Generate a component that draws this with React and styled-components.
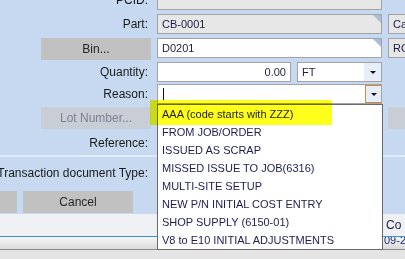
import React from 'react';
import styled, { createGlobalStyle } from 'styled-components';

const GlobalStyle = createGlobalStyle`
  html, body { margin: 0; padding: 0; background: #c6d9f0; }
  body { font-family: "Liberation Sans", Arial, sans-serif; }
`;

const reasons = [
  'AAA (code starts with ZZZ)',
  'FROM JOB/ORDER',
  'ISSUED AS SCRAP',
  'MISSED ISSUE TO JOB(6316)',
  'MULTI-SITE SETUP',
  'NEW P/N INITIAL COST ENTRY',
  'SHOP SUPPLY (6150-01)',
  'V8 to E10 INITIAL ADJUSTMENTS',
];

const Page = styled.div`
  position: relative;
  width: 405px;
  height: 259px;
  overflow: hidden;
  background: #c6d9f0;
  display: flex;
  flex-direction: column;
`;

const Form = styled.div`
  display: flex;
  flex-direction: column;
  margin-top: -10px;
`;

const Row = styled.div`
  display: grid;
  grid-template-columns: 151px 225px 60px;
  column-gap: 6px;
  height: ${(p) => p.h}px;
  margin-top: ${(p) => p.gap || 0}px;
  flex-shrink: 0;
`;

const Label = styled.div`
  display: flex;
  justify-content: flex-end;
  align-items: center;
  padding-right: 3px;
  font-size: 12px;
  color: #1a1a1a;
  white-space: nowrap;
  min-width: 0;
`;

const Field = styled.div`
  position: relative;
  box-sizing: border-box;
  height: ${(p) => p.h || 20}px;
  border: 1px solid #a3a3a3;
  background: ${(p) => (p.disabled ? '#e7e7e7' : '#ffffff')};
  display: flex;
  align-items: center;
  justify-content: ${(p) => (p.right ? 'flex-end' : 'flex-start')};
  padding: 0 4px;
  font-size: 11px;
  color: #1c1c44;
  white-space: nowrap;
  overflow: hidden;

  ${(p) =>
    p.corner &&
    `
    &::after {
      content: '';
      position: absolute;
      top: 0;
      right: 0;
      border-top: 8px solid #a9bedb;
      border-left: 8px solid transparent;
    }
  `}
`;

const Split = styled.div`
  display: flex;
  gap: 6px;
  min-width: 0;
`;

const Select = styled(Field)`
  flex: 1;
  padding-right: 0;
  justify-content: space-between;
`;

const ArrowBox = styled.div`
  box-sizing: border-box;
  width: 17px;
  height: 100%;
  display: flex;
  align-items: center;
  justify-content: center;
  background: #e6eef9;
  border: ${(p) => (p.focused ? '1px solid #d2883c' : 'none')};
  margin-right: ${(p) => (p.focused ? '-1px' : '0')};
`;

const Arrow = styled.span`
  width: 0;
  height: 0;
  border-left: 3px solid transparent;
  border-right: 3px solid transparent;
  border-top: 3px solid #111;
`;

const Caret = styled.span`
  width: 1px;
  height: 12px;
  background: #111;
  margin-left: 1px;
`;

const Button = styled.div`
  box-sizing: border-box;
  flex-shrink: 0;
  width: 110px;
  height: 22px;
  display: flex;
  align-items: center;
  justify-content: center;
  font-size: 12px;
  white-space: nowrap;
  background: ${(p) => (p.disabled ? '#c8cdd6' : '#c1c1c1')};
  color: ${(p) => (p.disabled ? '#7b8392' : '#262626')};
`;

const LabelButtonCell = styled.div`
  display: flex;
  justify-content: flex-end;
`;

const SideBox = styled.div`
  box-sizing: border-box;
  height: 20px;
  border: 1px solid #a3a3a3;
  background: #e6e6e6;
  font-size: 11px;
  color: #1c1c44;
  display: flex;
  align-items: center;
  padding-left: 4px;
`;

const SideBlock = styled.div`
  height: 22px;
  background: #c8cdd6;
`;

const Separator = styled.div`
  height: 2px;
  background: #e2ecf8;
  flex-shrink: 0;
`;

const ButtonBar = styled.div`
  width: 133px;
  height: 22px;
  margin-top: 2px;
  display: flex;
  justify-content: flex-end;
  gap: 6px;
  flex-shrink: 0;
`;

const Footer = styled.div`
  display: flex;
  flex-direction: column;
  margin-top: 1px;
  flex: 1;
`;

const InfoArea = styled.div`
  height: 22px;
  background: #eef0f4;
  display: flex;
  align-items: center;
  padding-left: 386px;
  font-size: 12px;
  color: #1c1c44;
  white-space: nowrap;
`;

const Colon = styled.span`
  color: #e08a1c;
  margin-left: 3px;
`;

const BlueLine = styled.div`
  height: 1px;
  background: #3f8ede;
`;

const StatusBar = styled.div`
  height: 12px;
  background: linear-gradient(#f6f6f6, #dadada);
  border-bottom: 1px solid #8c8c8c;
  overflow: hidden;
  padding-left: 384px;
  font-size: 11px;
  line-height: 12px;
  color: #1c2a6a;
  white-space: nowrap;
`;

const StatusText = styled.div`
  margin-top: -3px;
`;

const BottomBand = styled.div`
  flex: 1;
  background: #e4e4e4;
`;

const DropList = styled.ul`
  position: absolute;
  left: 157px;
  top: 104px;
  width: 226px;
  box-sizing: border-box;
  margin: 0;
  padding: 0;
  list-style: none;
  background: #ffffff;
  border: 1px solid #6a6a6a;
  z-index: 2;
`;

const Item = styled.li`
  height: 18px;
  display: flex;
  align-items: center;
  padding-left: 4px;
  font-size: 11px;
  color: #1e1c50;
  white-space: nowrap;
`;

const Highlight = styled.div`
  position: absolute;
  left: 150px;
  top: 100px;
  width: 182px;
  height: 25px;
  background: #ffff1e;
  mix-blend-mode: multiply;
  z-index: 3;
`;

export default function App() {
  return (
    <Page>
      <GlobalStyle />
      <Form>
        <Row h={20}>
          <Label>PCID:</Label>
          <Field disabled />
          <div />
        </Row>
        <Row h={20} gap={4}>
          <Label>Part:</Label>
          <Field disabled corner>CB-0001</Field>
          <SideBox>Ca</SideBox>
        </Row>
        <Row h={22} gap={4}>
          <LabelButtonCell>
            <Button>Bin...</Button>
          </LabelButtonCell>
          <Field corner>D0201</Field>
          <SideBox>RC</SideBox>
        </Row>
        <Row h={20} gap={2}>
          <Label>Quantity:</Label>
          <Split>
            <Field right style={{ width: 134 }}>0.00</Field>
            <Select>
              FT
              <ArrowBox>
                <Arrow />
              </ArrowBox>
            </Select>
          </Split>
          <div />
        </Row>
        <Row h={20} gap={2}>
          <Label>Reason:</Label>
          <Select>
            <Caret />
            <ArrowBox focused>
              <Arrow />
            </ArrowBox>
          </Select>
          <div />
        </Row>
        <Row h={22} gap={3}>
          <LabelButtonCell>
            <Button disabled>Lot Number...</Button>
          </LabelButtonCell>
          <div />
          <SideBlock />
        </Row>
        <Row h={25} gap={1}>
          <Label>Reference:</Label>
          <div />
          <div />
        </Row>
        <Separator />
        <Row h={32}>
          <Label>Transaction document Type:</Label>
          <div />
          <div />
        </Row>
        <ButtonBar>
          <Button>OK</Button>
          <Button>Cancel</Button>
        </ButtonBar>
      </Form>
      <Footer>
        <InfoArea>
          Co<Colon>:</Colon>
        </InfoArea>
        <BlueLine />
        <StatusBar>
          <StatusText>09-2016</StatusText>
        </StatusBar>
        <BottomBand />
      </Footer>
      <DropList>
        {reasons.map((r) => (
          <Item key={r}>{r}</Item>
        ))}
      </DropList>
      <Highlight />
    </Page>
  );
}
